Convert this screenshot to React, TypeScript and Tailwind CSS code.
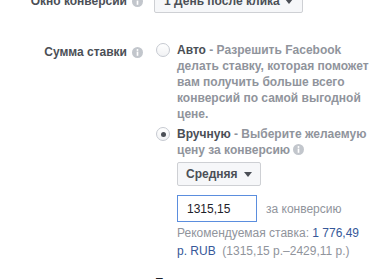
import React from "react";

const Info = () => (
  <svg width="11" height="11" viewBox="0 0 12 12" className="shrink-0">
    <circle cx="6" cy="6" r="6" fill="#c2c6cc" />
    <rect x="5.1" y="5" width="1.8" height="4.6" fill="#fff" />
    <circle cx="6" cy="3.2" r="1.05" fill="#fff" />
  </svg>
);

const Caret = () => (
  <svg width="8" height="5" viewBox="0 0 8 5" className="shrink-0">
    <path d="M0 0 L8 0 L4 5 Z" fill="#4b4f56" />
  </svg>
);

const Radio = ({ checked }: { checked?: boolean }) => (
  <span className="mt-[1px] flex h-[14px] w-[14px] shrink-0 items-center justify-center rounded-full border border-[#c6cad1] bg-gradient-to-b from-white to-[#f1f2f4]">
    {checked && <span className="h-[5px] w-[5px] rounded-full bg-[#4b4f56]" />}
  </span>
);

export default function App() {
  return (
    <div
      className="relative h-[279px] w-[386px] overflow-hidden bg-white text-[12px] leading-[16px]"
      style={{ fontFamily: "'Liberation Sans', Helvetica, Arial, sans-serif" }}
    >
      <div className="mt-[-11px] grid grid-cols-[143px_1fr] gap-x-[11px]">
        <div className="flex items-center justify-end gap-[5px] font-bold text-[#4b4f56]">
          <span>Окно конверсии</span>
          <Info />
        </div>
        <div>
          <button className="flex h-[24px] items-center gap-[5px] rounded-[2px] border border-[#ced0d4] bg-[#f6f7f9] px-[9px] font-bold text-[#4b4f56]">
            <span>1 День после клика</span>
            <Caret />
          </button>
        </div>
      </div>

      <div className="mt-[29px] grid grid-cols-[143px_1fr] gap-x-[11px]">
        <div className="flex items-start justify-end gap-[5px] pt-[3px] font-bold text-[#4b4f56]">
          <span className="leading-[14px]">Сумма ставки</span>
          <span className="mt-[2px]"><Info /></span>
        </div>
        <div className="pl-[2px]">
          <div className="flex gap-[7px]">
            <Radio />
            <div className="whitespace-nowrap font-bold text-[#90949c]">
              <span className="text-[#4b4f56]">Авто</span> - Разрешить Facebook
              <br />
              делать ставку, которая поможет
              <br />
              вам получить больше всего
              <br />
              конверсий по самой выгодной
              <br />
              цене.
            </div>
          </div>
          <div className="mt-[4px] flex gap-[7px]">
            <Radio checked />
            <div>
              <div className="whitespace-nowrap font-bold text-[#90949c]">
                <span className="text-[#4b4f56]">Вручную</span> - Выберите желаемую
                <br />
                цену за конверсию{" "}
                <span className="inline-block align-[-1px]"><Info /></span>
              </div>
              <button className="mt-[4px] flex h-[24px] items-center gap-[6px] rounded-[2px] border border-[#ced0d4] bg-[#f6f7f9] px-[8px] font-bold text-[#4b4f56]">
                <span>Средняя</span>
                <Caret />
              </button>
              <div className="mt-[9px] flex items-center gap-[9px]">
                <div className="flex h-[27px] w-[80px] items-center border border-[#5b8ede] px-[9px] text-[12px] text-[#1d2129]">
                  1315,15
                </div>
                <span className="text-[#90949c]">за конверсию</span>
              </div>
              <div className="mt-[2px] whitespace-nowrap leading-[18px] text-[#90949c]">
                Рекомендуемая ставка: <span className="text-[#365899]">1&nbsp;776,49</span>
                <br />
                <span className="text-[#365899]">р. RUB</span>&nbsp; (1315,15 р.–2429,11 р.)
              </div>
            </div>
          </div>
        </div>
      </div>
      <div className="mt-[15px] pl-[155px] text-[#1d2129]">Показ</div>
    </div>
  );
}
